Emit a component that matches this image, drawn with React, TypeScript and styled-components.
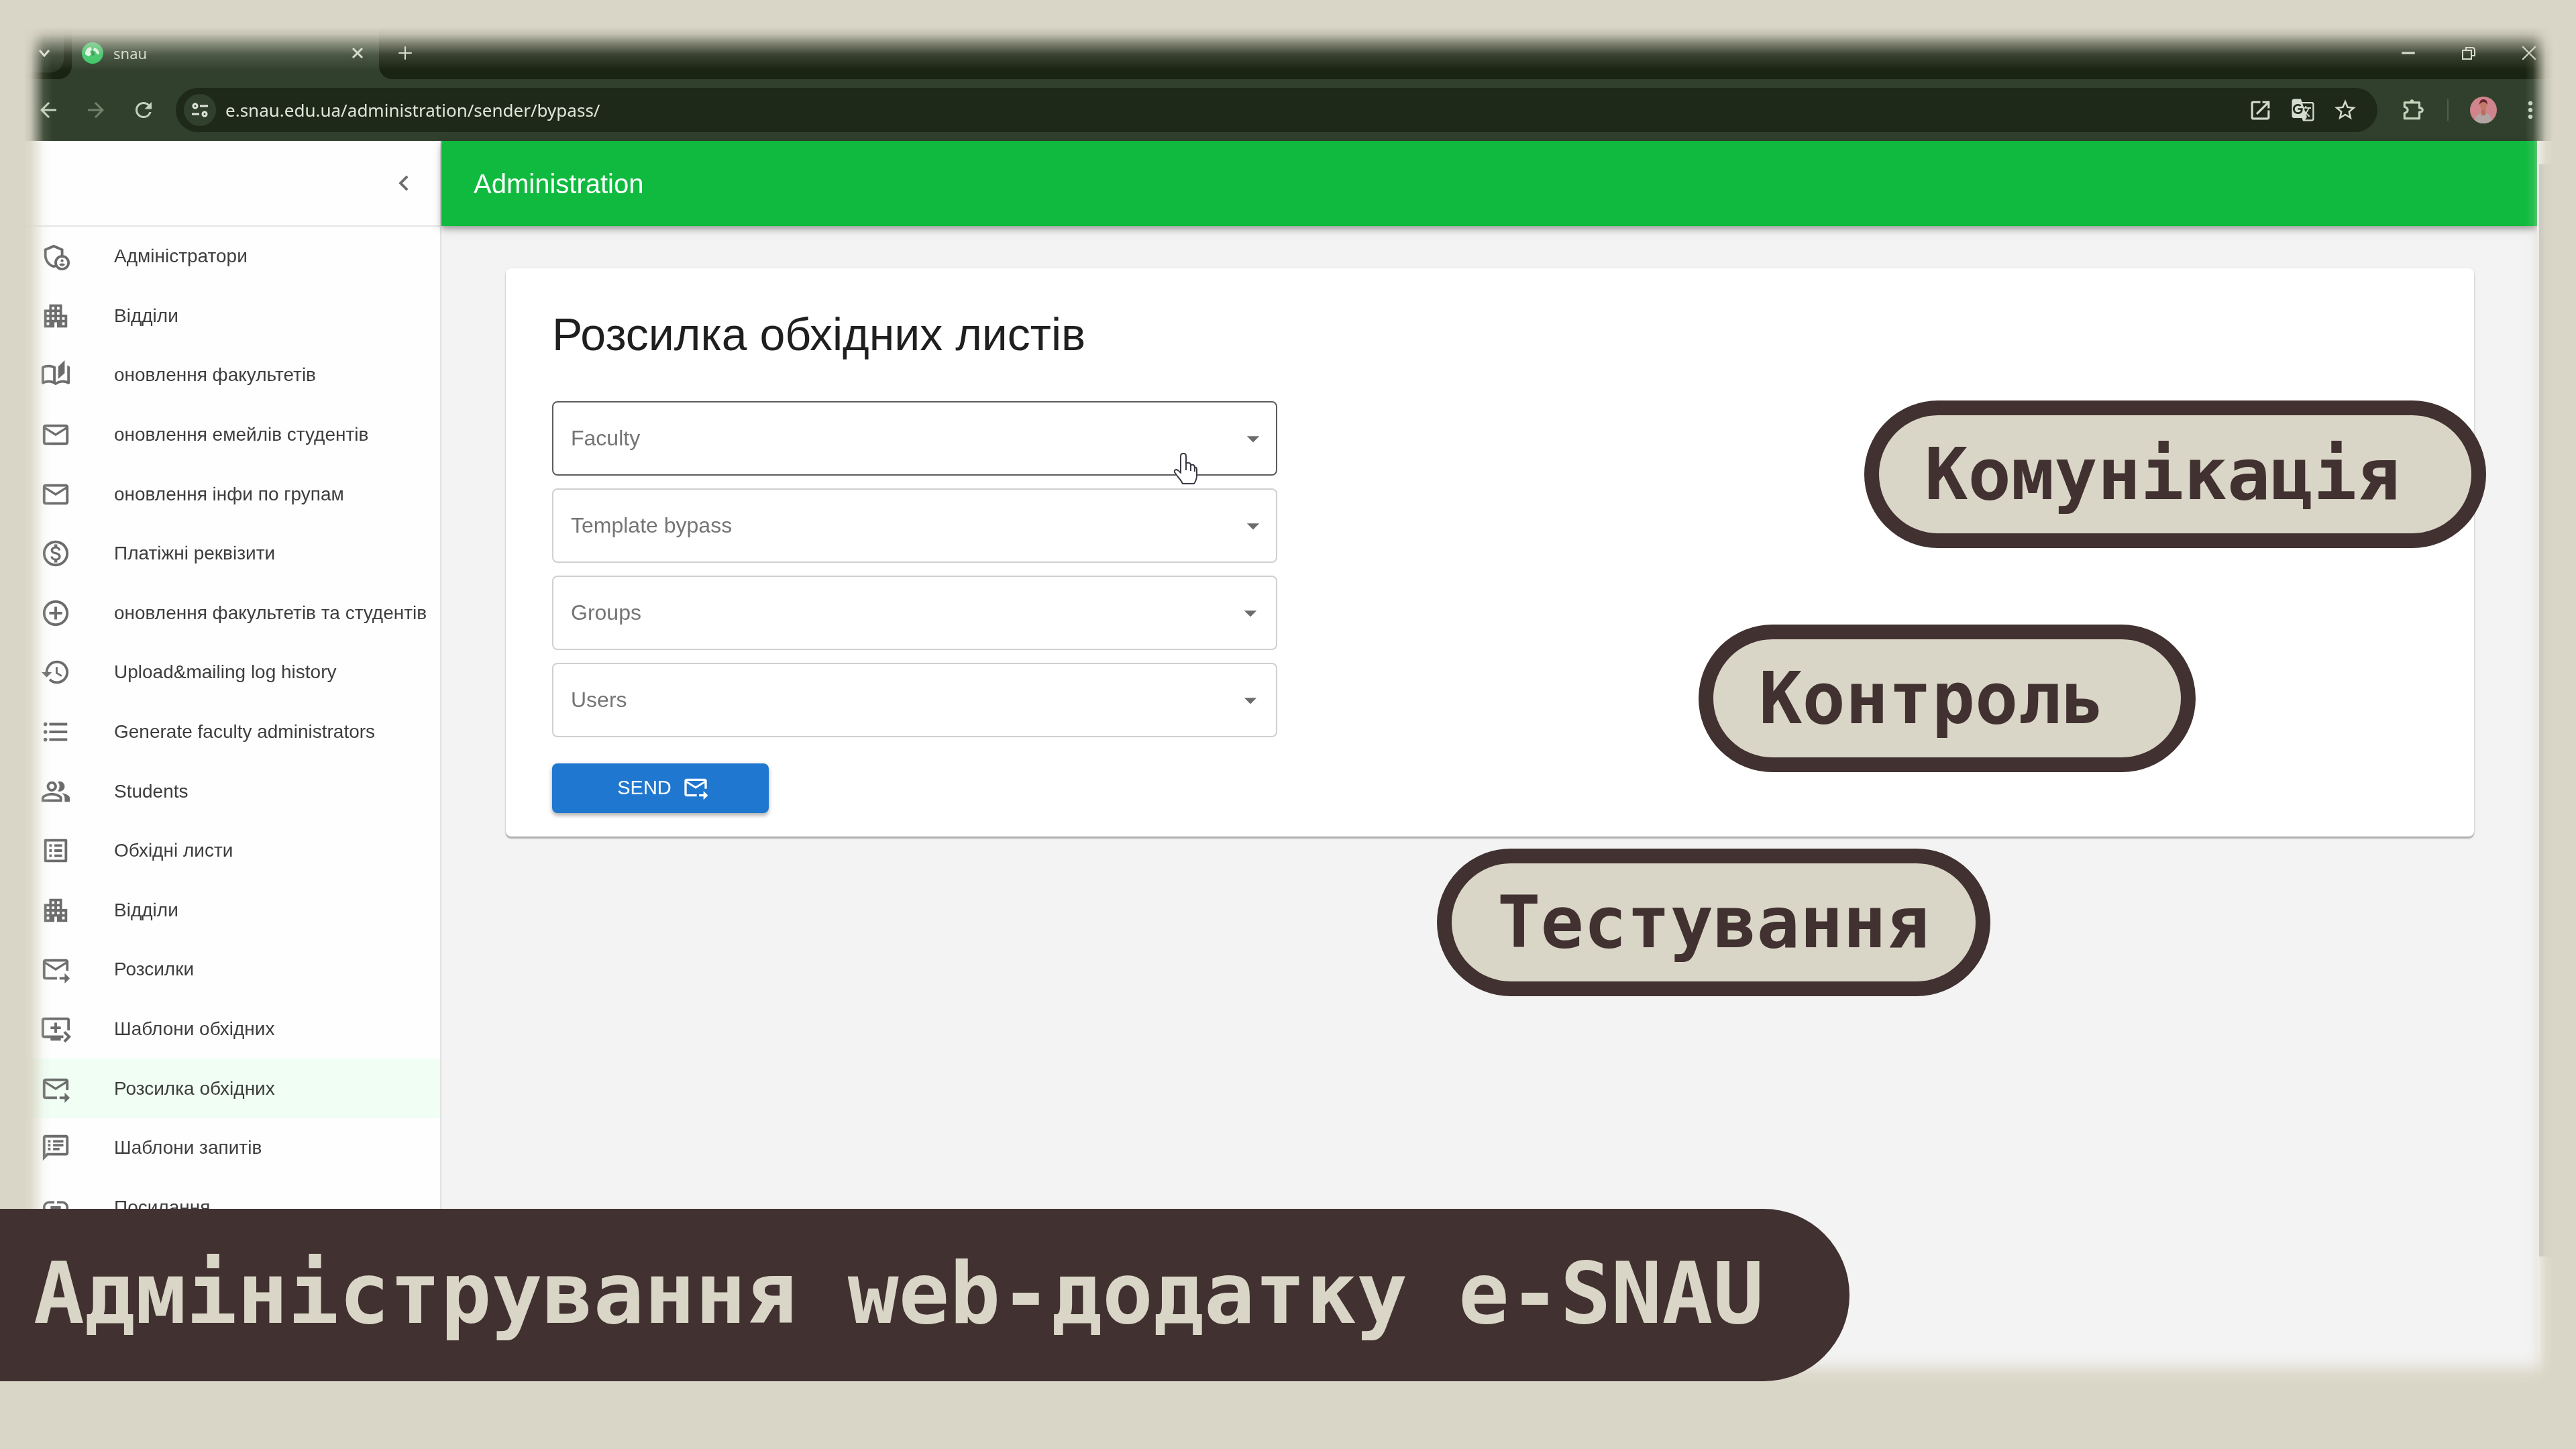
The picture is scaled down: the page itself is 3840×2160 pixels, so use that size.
import React from "react";
import styled, { createGlobalStyle } from "styled-components";
import type { IconType } from "react-icons";
import {
  MdAddCircleOutline,
  MdApartment,
  MdArrowBack,
  MdArrowDropDown,
  MdArrowForward,
  MdChevronLeft,
  MdFormatListBulleted,
  MdGTranslate,
  MdHistory,
  MdLink,
  MdMailOutline,
  MdMoreVert,
  MdOpenInNew,
  MdOutlineAdminPanelSettings,
  MdOutlineAutoStories,
  MdOutlineExtension,
  MdOutlineForwardToInbox,
  MdOutlineListAlt,
  MdOutlineMonetizationOn,
  MdOutlinePeopleAlt,
  MdOutlineQueuePlayNext,
  MdOutlineSpeakerNotes,
  MdRefresh,
  MdStarBorder,
} from "react-icons/md";

const sand = "#dad6c7";
const cocoa = "#413231";
const sans = `"Liberation Sans", Arial, sans-serif`;
const chromeSans = `"Noto Sans", "Open Sans", sans-serif`;
const mono = `"DejaVu Sans Mono", monospace`;

const GlobalStyle = createGlobalStyle`
  *, *::before, *::after { box-sizing: border-box; }
  body { margin: 0; background: ${sand}; font-family: ${sans}; }
  button, select { font: inherit; }
  svg { display: block; flex: none; }
`;

const Stage = styled.main`
  position: relative;
  display: flex;
  min-height: 100vh;
  padding: 40px 34px 96px 36px;
  overflow: hidden;
  background: ${sand};
`;

const BrowserWindow = styled.div`
  flex: 1;
  display: flex;
  flex-direction: column;
  min-width: 0;
  mask-image:
    linear-gradient(to right, transparent 0, rgba(0, 0, 0, 0.12) 10px, rgba(0, 0, 0, 0.5) 20px,
      rgba(0, 0, 0, 0.88) 29px, #000 42px, #000 calc(100% - 42px), rgba(0, 0, 0, 0.88) calc(100% - 30px),
      rgba(0, 0, 0, 0.5) calc(100% - 21px), rgba(0, 0, 0, 0.12) calc(100% - 11px), transparent 100%),
    linear-gradient(to bottom, transparent 0, rgba(0, 0, 0, 0.12) 11px, rgba(0, 0, 0, 0.5) 26px,
      rgba(0, 0, 0, 0.84) 42px, #000 64px, #000 calc(100% - 52px), rgba(0, 0, 0, 0.88) calc(100% - 38px),
      rgba(0, 0, 0, 0.5) calc(100% - 26px), rgba(0, 0, 0, 0.12) calc(100% - 14px), transparent 100%);
  mask-composite: intersect;
`;

/* ---------- browser chrome ---------- */

const TabStrip = styled.div`
  display: flex;
  height: 78px;
  background: #31402d;
`;

const SearchZone = styled.div`
  display: flex;
  width: 71px;
  padding-bottom: 10px;
  border-bottom-right-radius: 20px;
  background: #1a2412;
`;

const TabSearch = styled.button`
  display: flex;
  align-items: center;
  justify-content: center;
  width: 59px;
  padding: 10px 0 0;
  border: 0;
  border-radius: 0 0 20px 0;
  background: #2b3826;
  color: #dfe6da;
`;

const Tab = styled.div`
  display: flex;
  align-items: center;
  gap: 14px;
  width: 458px;
  padding: 0 16px 0 14px;
  color: #d5dccf;
  font: 22px/30px ${chromeSans};
`;

const TabTitle = styled.span`
  flex: 1;
`;

const GlyphButton = styled.button<{ $w?: number; $tone?: string }>`
  display: flex;
  align-items: center;
  justify-content: center;
  width: ${(p) => p.$w ?? 32}px;
  padding: 0;
  border: 0;
  background: transparent;
  color: ${(p) => p.$tone ?? "#d5dccf"};
`;

const NewTabZone = styled.div`
  display: flex;
  flex: 1;
  align-items: stretch;
  padding: 0 20px 0 23px;
  border-bottom-left-radius: 20px;
  background: #1a2412;
`;

const WindowControls = styled.div`
  display: flex;
  margin-left: auto;
  gap: 58px;
`;

const Toolbar = styled.div`
  display: flex;
  align-items: center;
  height: 92px;
  padding: 0 18px 0 20px;
  background: #31402d;
`;

const NavButtons = styled.div`
  display: flex;
  gap: 39px;
  margin-right: 32px;
`;

const AddressBar = styled.div`
  display: flex;
  flex: 1;
  align-items: center;
  height: 66px;
  padding: 0 30px 0 12px;
  border-radius: 33px;
  background: #1e2919;
  color: #e0e6db;
`;

const SiteInfo = styled.button`
  display: flex;
  align-items: center;
  justify-content: center;
  width: 48px;
  height: 48px;
  margin-right: 14px;
  padding: 0;
  border: 0;
  border-radius: 50%;
  background: #31402d;
  color: #e0e6db;
`;

const Url = styled.span`
  flex: 1;
  font: 26px/36px ${chromeSans};
`;

const AddressActions = styled.div`
  display: flex;
  gap: 26px;
`;

const ToolbarActions = styled.div`
  display: flex;
  align-items: center;
  margin-left: 34px;
`;

const ToolbarRule = styled.span`
  width: 2px;
  height: 32px;
  margin: 0 32px;
  background: #4c6046;
`;

const Avatar = styled.span`
  margin-right: 34px;
`;

/* ---------- application ---------- */

const AppBody = styled.div`
  display: flex;
  flex: 1;
  background: #f3f3f3;
`;

const Sidebar = styled.aside`
  display: flex;
  flex-direction: column;
  width: 622px;
  flex: none;
  border-right: 2px solid #e2e2e2;
  background: #fefefe;
`;

const SidebarTop = styled.div`
  display: flex;
  align-items: center;
  justify-content: flex-end;
  height: 128px;
  padding-right: 30px;
  border-bottom: 2px solid #e6e6e6;
`;

const Menu = styled.nav`
  display: grid;
  flex: 1;
  grid-template-rows: repeat(17, 1fr);
  padding-bottom: 220px;
`;

const MenuLink = styled.a<{ $active?: boolean }>`
  display: flex;
  align-items: center;
  gap: 64px;
  min-height: 80px;
  padding-left: 24px;
  background: ${(p) => (p.$active ? "#f0fef4" : "transparent")};
  color: #3d3d3d;
  font-size: 28px;
  line-height: 40px;
  text-decoration: none;
  white-space: nowrap;

  svg {
    color: #6c6c6c;
  }
`;

const Content = styled.div`
  flex: 1;
  min-width: 0;
`;

const Header = styled.header`
  display: flex;
  align-items: center;
  height: 127px;
  padding-left: 48px;
  background: #0fba3f;
  box-shadow: 0 4px 8px rgba(0, 0, 0, 0.28), 0 6px 16px rgba(0, 0, 0, 0.12);
  color: #fff;
  font-size: 40px;
  line-height: 56px;
`;

const Card = styled.section`
  margin: 63px 94px 0 96px;
  padding: 58px 69px 35px;
  border-radius: 8px;
  background: #fff;
  box-shadow: 0 3px 2px rgba(0, 0, 0, 0.26), 0 1px 4px rgba(0, 0, 0, 0.1);
`;

const Title = styled.h1`
  margin: 0 0 60px;
  color: #1f1f1f;
  font-size: 68px;
  font-weight: 400;
  line-height: 80px;
`;

const Form = styled.form`
  display: flex;
  flex-direction: column;
  align-items: flex-start;
  gap: 19px;
`;

const Field = styled.label<{ $inset?: boolean }>`
  display: grid;
  align-items: center;
  width: 1081px;
  max-width: 100%;

  > * {
    grid-area: 1 / 1;
  }

  svg {
    justify-self: end;
    margin-right: ${(p) => (p.$inset ? 18 : 14)}px;
    color: #6c6c6c;
    pointer-events: none;
  }
`;

const Select = styled.select<{ $hovered?: boolean }>`
  appearance: none;
  width: 100%;
  height: 111px;
  padding: 0 72px 2px 26px;
  border: 2px solid ${(p) => (p.$hovered ? "#5c5c5c" : "#d0d0d0")};
  border-radius: 8px;
  background: #fff;
  color: #757575;
  font-size: 32px;
  line-height: 40px;
`;

const SendButton = styled.button`
  display: flex;
  align-items: center;
  justify-content: center;
  gap: 16px;
  width: 323px;
  height: 74px;
  margin-top: 20px;
  padding: 0 0 2px 8px;
  border: 0;
  border-radius: 8px;
  background: #1f77cf;
  box-shadow: 0 4px 5px rgba(0, 0, 0, 0.22), 0 2px 8px rgba(0, 0, 0, 0.12);
  color: #fff;
  font-size: 29px;
  line-height: 40px;
`;

const Scrollbar = styled.div`
  width: 24px;
  flex: none;
  padding-top: 35px;
  background: #fcfcfc;
`;

const ScrollThumb = styled.div`
  height: 1628px;
  margin-left: 3px;
  background: #bcbcbc;
`;

/* ---------- presentation captions ---------- */

const Tag = styled.div<{ $x: number; $y: number; $w: number }>`
  position: absolute;
  left: ${(p) => p.$x}px;
  top: ${(p) => p.$y}px;
  display: flex;
  align-items: center;
  width: ${(p) => p.$w}px;
  height: 220px;
  padding: 0 0 0 68px;
  border: 22px solid ${cocoa};
  border-radius: 110px;
  background: ${sand};
  color: ${cocoa};
  font: bold 107px/124px ${mono};
  white-space: nowrap;
`;

const Banner = styled.div`
  position: absolute;
  left: 0;
  bottom: 101px;
  display: flex;
  align-items: center;
  height: 257px;
  padding: 0 128px 4px 50px;
  border-radius: 0 128px 128px 0;
  background: ${cocoa};
  color: ${sand};
  font: bold 126px/148px ${mono};
  white-space: nowrap;
`;

const Pointer = styled.svg`
  position: absolute;
  left: 1748px;
  top: 674px;
`;

const menu: { label: string; icon: IconType; active?: boolean }[] = [
  { label: "Адміністратори", icon: MdOutlineAdminPanelSettings },
  { label: "Відділи", icon: MdApartment },
  { label: "оновлення факультетів", icon: MdOutlineAutoStories },
  { label: "оновлення емейлів студентів", icon: MdMailOutline },
  { label: "оновлення інфи по групам", icon: MdMailOutline },
  { label: "Платіжні реквізити", icon: MdOutlineMonetizationOn },
  { label: "оновлення факультетів та студентів", icon: MdAddCircleOutline },
  { label: "Upload&mailing log history", icon: MdHistory },
  { label: "Generate faculty administrators", icon: MdFormatListBulleted },
  { label: "Students", icon: MdOutlinePeopleAlt },
  { label: "Обхідні листи", icon: MdOutlineListAlt },
  { label: "Відділи", icon: MdApartment },
  { label: "Розсилки", icon: MdOutlineForwardToInbox },
  { label: "Шаблони обхідних", icon: MdOutlineQueuePlayNext },
  { label: "Розсилка обхідних", icon: MdOutlineForwardToInbox, active: true },
  { label: "Шаблони запитів", icon: MdOutlineSpeakerNotes },
  { label: "Посилання", icon: MdLink },
];

const fields = [
  { label: "Faculty", hovered: true },
  { label: "Template bypass" },
  { label: "Groups", inset: true },
  { label: "Users", inset: true },
];

const tags = [
  { text: "Комунікація", x: 2779, y: 597, w: 927 },
  { text: "Контроль", x: 2532, y: 931, w: 741 },
  { text: "Тестування", x: 2142, y: 1265, w: 825 },
];

function Stroke({ size, d, width = 2 }: { size: number; d: string; width?: number }) {
  return (
    <svg width={size} height={size} viewBox="0 0 24 24" fill="none" stroke="currentColor" strokeWidth={width}>
      <path d={d} />
    </svg>
  );
}

function Favicon() {
  return (
    <svg width="34" height="34" viewBox="0 0 34 34" aria-hidden="true">
      <circle cx="17" cy="17" r="16" fill="#35c763" />
      <path d="M6 19c0-6 3-10 8-11l2 4-3 3 2 4-4 3zM19 9c5 1 8 5 8 10l-4-1-1-3-4-2z" fill="#e9fbef" />
      <path d="M15 13l4 2 1 5-4 1z" fill="#1a8f42" />
    </svg>
  );
}

function BrowserChrome() {
  return (
    <>
      <TabStrip>
        <SearchZone>
          <TabSearch aria-label="Search tabs">
            <Stroke size={24} d="M5 8l7 8 7-8" width={3} />
          </TabSearch>
        </SearchZone>
        <Tab>
          <Favicon />
          <TabTitle>snau</TabTitle>
          <GlyphButton aria-label="Close tab">
            <Stroke size={24} d="M5 5l14 14M19 5L5 19" width={3} />
          </GlyphButton>
        </Tab>
        <NewTabZone>
          <GlyphButton aria-label="New tab">
            <Stroke size={26} d="M12 3v18M3 12h18" width={2} />
          </GlyphButton>
          <WindowControls>
            <GlyphButton aria-label="Minimize">
              <Stroke size={26} d="M3 12h18" width={3} />
            </GlyphButton>
            <GlyphButton aria-label="Restore">
              <Stroke size={24} d="M3 8h13v13H3zM8 8V4h9q4 0 4 4v8h-4" width={2} />
            </GlyphButton>
            <GlyphButton aria-label="Close">
              <Stroke size={26} d="M3 3l18 18M21 3L3 21" width={2} />
            </GlyphButton>
          </WindowControls>
        </NewTabZone>
      </TabStrip>
      <Toolbar>
        <NavButtons>
          <GlyphButton aria-label="Back" $tone="#c3d3bb">
            <MdArrowBack size={36} />
          </GlyphButton>
          <GlyphButton aria-label="Forward" $tone="#71826b">
            <MdArrowForward size={36} />
          </GlyphButton>
          <GlyphButton aria-label="Reload" $tone="#c3d3bb">
            <MdRefresh size={36} />
          </GlyphButton>
        </NavButtons>
        <AddressBar>
          <SiteInfo aria-label="Site information">
            <svg width="28" height="28" viewBox="0 0 28 28" fill="none" stroke="currentColor" strokeWidth="3">
              <circle cx="7" cy="8" r="3" />
              <path d="M14 8h12M2 20h11" />
              <circle cx="21" cy="20" r="3" />
            </svg>
          </SiteInfo>
          <Url>e.snau.edu.ua/administration/sender/bypass/</Url>
          <AddressActions>
            <GlyphButton aria-label="Open in new window" $w={37}>
              <MdOpenInNew size={37} />
            </GlyphButton>
            <GlyphButton aria-label="Translate" $w={37}>
              <MdGTranslate size={36} />
            </GlyphButton>
            <GlyphButton aria-label="Bookmark" $w={37}>
              <MdStarBorder size={38} />
            </GlyphButton>
          </AddressActions>
        </AddressBar>
        <ToolbarActions>
          <GlyphButton aria-label="Extensions" $w={38} $tone="#c3d3bb">
            <svg width="38" height="38" viewBox="0 0 24 24" fill="none" stroke="currentColor" strokeWidth="2">
              <path
                d="M4 5h14v5q3 0 3 2t-3 2v6H4v-5q3-1 3-3T4 9z"
                strokeLinejoin="round"
              />
              <path d="M9 5q0-3 2-3t2 3z" fill="currentColor" stroke="none" />
            </svg>
          </GlyphButton>
          <ToolbarRule />
          <Avatar>
            <svg width="40" height="40" viewBox="0 0 40 40" role="img" aria-label="Profile">
              <defs>
                <clipPath id="face">
                  <circle cx="20" cy="20" r="20" />
                </clipPath>
              </defs>
              <g clipPath="url(#face)">
                <rect width="40" height="40" fill="#d0848c" />
                <path d="M7 40q0-15 13-16 13 1 13 16z" fill="#b1a6a3" />
                <rect x="17" y="16" width="6" height="12" fill="#b7705c" />
                <ellipse cx="20" cy="13" rx="5" ry="7" fill="#c07b66" />
                <path d="M14 12q0-8 6-8t6 8q-3-4-6-4t-6 4z" fill="#6b2430" />
              </g>
            </svg>
          </Avatar>
          <GlyphButton aria-label="Menu" $tone="#c3d3bb">
            <MdMoreVert size={40} />
          </GlyphButton>
        </ToolbarActions>
      </Toolbar>
    </>
  );
}

export default function App() {
  return (
    <Stage>
      <GlobalStyle />
      <BrowserWindow>
        <BrowserChrome />
        <AppBody>
          <Sidebar>
            <SidebarTop>
              <GlyphButton aria-label="Collapse menu" $w={48} $tone="#6c6c6c">
                <MdChevronLeft size={46} />
              </GlyphButton>
            </SidebarTop>
            <Menu>
              {menu.map(({ label, icon: Icon, active }, i) => (
                <MenuLink key={i} href="#" $active={active}>
                  <Icon size={46} />
                  {label}
                </MenuLink>
              ))}
            </Menu>
          </Sidebar>
          <Content>
            <Header>Administration</Header>
            <Card>
              <Title>Розсилка обхідних листів</Title>
              <Form onSubmit={(e) => e.preventDefault()}>
                {fields.map((f) => (
                  <Field key={f.label} $inset={f.inset}>
                    <Select aria-label={f.label} $hovered={f.hovered} defaultValue="">
                      <option value="">{f.label}</option>
                    </Select>
                    <MdArrowDropDown size={44} />
                  </Field>
                ))}
                <SendButton type="submit">
                  SEND
                  <MdOutlineForwardToInbox size={40} />
                </SendButton>
              </Form>
            </Card>
          </Content>
          <Scrollbar>
            <ScrollThumb />
          </Scrollbar>
        </AppBody>
      </BrowserWindow>
      <Pointer width="38" height="50" viewBox="0 0 38 50" aria-hidden="true">
        <path
          d="M12 28V6q0-4 4-4t4 4v12q1-3 4-2 3 0 3 4 1-2 4-1 2 1 2 4 3-1 3 3v9q0 6-4 12H15q-3-6-7-10l-5-7q-1-4 3-4 3 1 6 5z"
          fill="#fff"
          stroke="#3c3944"
          strokeWidth="2"
          strokeLinejoin="round"
        />
        <path d="M20 18v9M27 20v8M33 23v6" stroke="#3c3944" strokeWidth="2" />
      </Pointer>
      {tags.map((t) => (
        <Tag key={t.text} $x={t.x} $y={t.y} $w={t.w}>
          {t.text}
        </Tag>
      ))}
      <Banner>Адміністрування web-додатку e-SNAU</Banner>
    </Stage>
  );
}
